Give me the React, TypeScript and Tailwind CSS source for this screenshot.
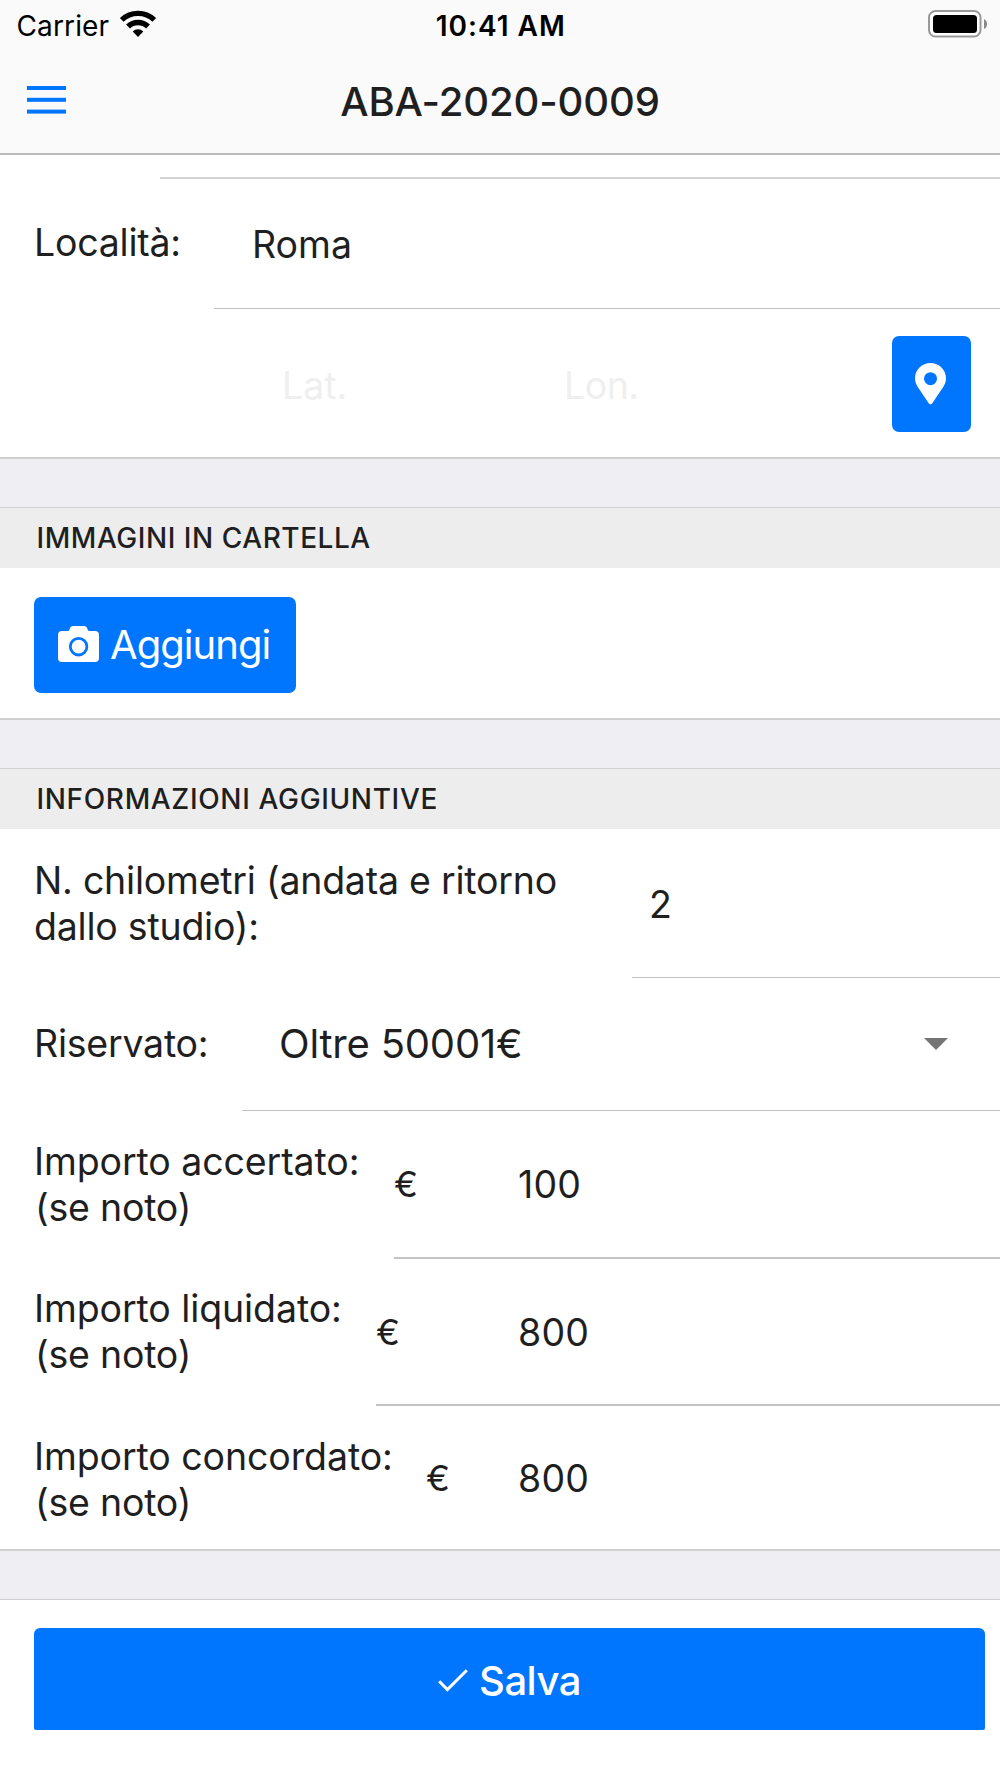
// Case detail form: location, folder images and additional info
import type { ReactNode } from 'react';
import clsx from 'clsx';

interface RowProps {
  label: ReactNode;
  /** Width class of the label column, the divider starts after it */
  labelWidth: string;
  /** Row height class */
  height: string;
  divider?: string;
  children: ReactNode;
}

interface AmountProps {
  label: string;
  labelWidth: string;
  currencyWidth: string;
  height: string;
  divider?: string;
  value: string;
}

function WifiIcon() {
  return (
    <svg className="mb-[3px]" width="38" height="28" viewBox="0 0 38 28" fill="none" stroke="#000">
      <path d="M2.7 9.94A23.6 23.6 0 0 1 35.3 9.94" strokeWidth="5.3" />
      <path d="M9 16.5A14.5 14.5 0 0 1 29 16.5" strokeWidth="5.6" />
      <path d="M19 27L13.7 21.4A7.7 7.7 0 0 1 24.3 21.4Z" fill="#000" stroke="none" />
    </svg>
  );
}

function BatteryIcon() {
  return (
    <svg width="60" height="28" viewBox="0 0 60 28">
      <rect x="1" y="1" width="51.5" height="25.5" rx="6.5" fill="#fff" stroke="#999" strokeWidth="2" />
      <rect x="5" y="5" width="44" height="18" rx="3.5" fill="#000" />
      <path d="M56 9Q59 10.5 59 14Q59 17.5 56 19Z" fill="#8a8a8a" />
    </svg>
  );
}

function MenuIcon() {
  return (
    <svg className="mb-[5px]" width="39" height="28" viewBox="0 0 39 28" fill="#0076ff">
      <rect y="0" width="39" height="4" />
      <rect y="11.8" width="39" height="4" />
      <rect y="23.6" width="39" height="4" />
    </svg>
  );
}

function PinIcon() {
  return (
    <svg className="mr-0.5" width="31" height="42" viewBox="0 0 31 42" fill="#fff">
      <path
        fillRule="evenodd"
        d="M15.5 0C6.9 0 0 6.8 0 15.2C0 18.5 1.2 21.5 2.8 24L13.7 40.3Q15.5 42.6 17.3 40.3L28.2 24C29.8 21.5 31 18.5 31 15.2C31 6.8 24.1 0 15.5 0ZM15.5 9.2A6.5 6.5 0 1 1 15.5 22.2A6.5 6.5 0 1 1 15.5 9.2Z"
      />
    </svg>
  );
}

function CameraIcon() {
  return (
    <svg className="mb-0.5" width="41" height="36" viewBox="0 0 41 36">
      <path
        fill="#fff"
        d="M4 5H9.5C10.8 5 11.2 4.4 11.6 3.2C12.3 1 13.4 0 15.2 0H26C27.8 0 28.9 1 29.6 3.2C30 4.4 30.4 5 31.2 5H37Q41 5 41 9V32Q41 36 37 36H4Q0 36 0 32V9Q0 5 4 5Z"
      />
      <circle cx="20.6" cy="20.7" r="8.3" fill="none" stroke="#0076ff" strokeWidth="2.8" />
    </svg>
  );
}

function CheckIcon() {
  return (
    <svg width="30" height="23" viewBox="0 0 30 23" fill="none" stroke="#fff" strokeWidth="3">
      <path d="M1.2 12.2L9.4 20.5L28.8 1.2" />
    </svg>
  );
}

function SectionTitle({ children }: { children: ReactNode }) {
  return (
    <h2 className="flex h-[61px] items-center border-t border-[#d0d0d2] bg-[#ededed] pl-[36.5px] text-[28px] font-medium">
      {children}
    </h2>
  );
}

function Gap() {
  return <div className="h-12 bg-[#efeef3]" />;
}

function Row({ label, labelWidth, height, divider, children }: RowProps) {
  return (
    <div className={clsx('flex pl-[34px]', height)}>
      <div className={clsx('flex shrink-0 items-center leading-[46px] tracking-[-0.23px]', labelWidth)}>
        <div>{label}</div>
      </div>
      <div className={clsx('flex flex-1 items-center border-[#c3c3c4]', divider)}>{children}</div>
    </div>
  );
}

function AmountRow({ label, labelWidth, currencyWidth, height, divider, value }: AmountProps) {
  return (
    <Row
      label={
        <>
          <div className="tracking-[-0.1px]">{label}</div>
          <div className="pl-px">(se noto)</div>
        </>
      }
      labelWidth={labelWidth}
      height={height}
      divider={divider}
    >
      <span className={clsx('shrink-0 text-[36px]', currencyWidth)}>€</span>
      <span className="pt-0.5 tracking-[0.2px]">{value}</span>
    </Row>
  );
}

export default function App() {
  return (
    <div className="flex h-[1778px] w-[1000px] flex-col overflow-hidden bg-white font-['Inter','Liberation_Sans',sans-serif] text-[37.5px] leading-[46px] text-[#1f1f1f]">
      <header className="h-[155px] border-b-2 border-[#bcbcbc] bg-[#fafafa]">
        <div className="grid h-[51px] grid-cols-3 items-center pr-[12px] pl-[16.5px] text-[28px] font-normal text-black">
          <div className="flex items-center gap-[10px]">
            <span className="tracking-[0.13px]">Carrier</span>
            <WifiIcon />
          </div>
          <span className="pr-[3px] text-center font-semibold tracking-[1px]">10:41 AM</span>
          <div className="flex justify-end pb-[3px]">
            <BatteryIcon />
          </div>
        </div>
        <div className="grid h-[102px] grid-cols-[1fr_auto_1fr] items-center pl-[27px] pr-[27px]">
          <MenuIcon />
          <h1 className="text-[40px] font-medium tracking-[-0.1px]">ABA-2020-0009</h1>
        </div>
      </header>

      <section className="border-b-2 border-[#cfcfcf]">
        <div className="ml-[160px] h-6 border-b-2 border-[#d2d2d2]" />
        <Row label={<div className="pb-0.5">Località:</div>} labelWidth="w-[180px]" height="h-[130px]" divider="border-b">
          <span className="pt-0.5 pl-[38px]">Roma</span>
        </Row>
        <div className="flex h-[148px] items-center pt-px pr-[29px] pl-[282px] text-[#efefef]">
          <span className="w-[282px] pt-1">Lat.</span>
          <span className="flex-1 pt-1 tracking-[-0.5px]">Lon.</span>
          <button className="flex h-24 w-[79px] items-center justify-center rounded-[7px] bg-[#0076ff]">
            <PinIcon />
          </button>
        </div>
      </section>

      <Gap />

      <section className="border-b-2 border-[#d0d0d2]">
        <SectionTitle>
          <span className="tracking-[0.55px]">IMMAGINI IN CARTELLA</span>
        </SectionTitle>
        <div className="h-[150px] pt-[29px] pl-[34px]">
          <button className="flex h-24 w-[262px] items-center gap-[11px] rounded-[7px] bg-[#0076ff] pl-[24px] text-[40px] font-normal tracking-[-0.95px] text-white">
            <CameraIcon />
            <span>Aggiungi</span>
          </button>
        </div>
      </section>

      <Gap />

      <section className="border-b-2 border-[#cfcfcf]">
        <SectionTitle>
          <span className="tracking-[0.65px]">INFORMAZIONI AGGIUNTIVE</span>
        </SectionTitle>
        <Row
          label={
            <>
              N. chilometri (andata e ritorno
              <br />
              dallo studio):
            </>
          }
          labelWidth="w-[598px]"
          height="h-[149px]"
          divider="border-b"
        >
          <span className="pt-1 pl-[17px]">2</span>
        </Row>
        <Row label={<div className="pb-px">Riservato:</div>} labelWidth="w-[208px]" height="h-[133px]" divider="border-b">
          <span className="flex-1 pl-[37px] text-[40px] tracking-[-0.2px]">Oltre 50001€</span>
          <svg className="mr-[52px]" width="24" height="12" viewBox="0 0 24 12" fill="#757575">
            <path d="M0 0H24L12 12Z" />
          </svg>
        </Row>
        <AmountRow label="Importo accertato:" labelWidth="w-[360px] pb-px" currencyWidth="w-[124px]" height="h-[148px]" divider="border-b-2" value="100" />
        <AmountRow label="Importo liquidato:" labelWidth="w-[342px] pb-0.5" currencyWidth="w-[142px]" height="h-[147px]" divider="border-b-2" value="800" />
        <AmountRow label="Importo concordato:" labelWidth="w-[392px] pt-[3px]" currencyWidth="w-[92px]" height="h-[143px] pt-px" value="800" />
      </section>

      <Gap />

      <footer className="flex-1 border-t border-[#d0d0d2] pt-7 pr-[15px] pl-[34px]">
        <button className="flex h-[102px] w-full items-center justify-center gap-[11px] rounded-t-[6px] rounded-b-[2px] bg-[#0076ff] pt-[3px] text-[40px] font-medium tracking-[-0.5px] text-white">
          <CheckIcon />
          <span className="pt-px">Salva</span>
        </button>
      </footer>
    </div>
  );
}
